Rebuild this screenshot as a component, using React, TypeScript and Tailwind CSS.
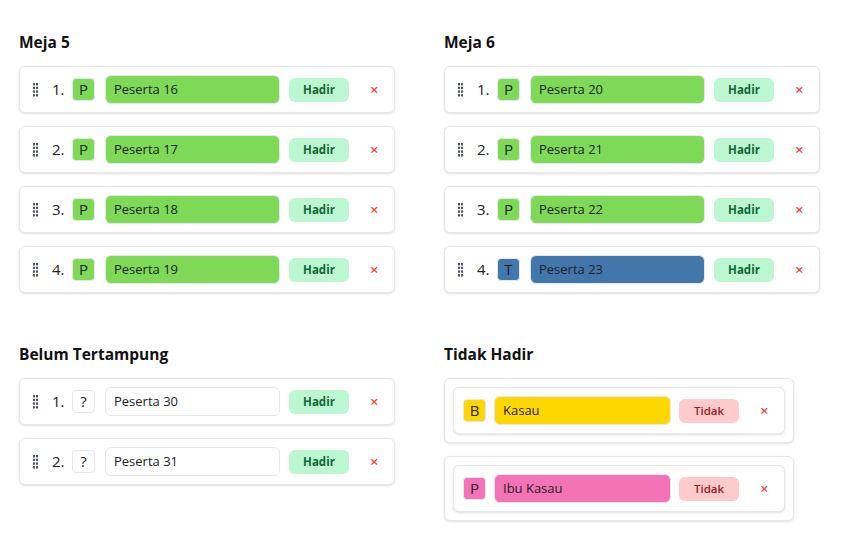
import React from "react";

interface Peserta {
  initial: string;
  name: string;
  color?: string; // warna latar badge & nama
}

const meja5: Peserta[] = [
  { initial: "P", name: "Peserta 16", color: "bg-[#7ed957]" },
  { initial: "P", name: "Peserta 17", color: "bg-[#7ed957]" },
  { initial: "P", name: "Peserta 18", color: "bg-[#7ed957]" },
  { initial: "P", name: "Peserta 19", color: "bg-[#7ed957]" },
];

const meja6: Peserta[] = [
  { initial: "P", name: "Peserta 20", color: "bg-[#7ed957]" },
  { initial: "P", name: "Peserta 21", color: "bg-[#7ed957]" },
  { initial: "P", name: "Peserta 22", color: "bg-[#7ed957]" },
  { initial: "T", name: "Peserta 23", color: "bg-[#4177ab]" },
];

const belum: Peserta[] = [
  { initial: "?", name: "Peserta 30" },
  { initial: "?", name: "Peserta 31" },
];

const tidakHadir: Peserta[] = [
  { initial: "B", name: "Kasau", color: "bg-[#ffd700]" },
  { initial: "P", name: "Ibu Kasau", color: "bg-[#f472b6]" },
];

// ikon pegangan drag (titik 2x4)
const Grip = () => (
  <svg width="5" height="14" viewBox="0 0 5 14" className="shrink-0">
    {[0, 1, 2, 3].map((r) =>
      [0, 3].map((c) => (
        <rect key={`${r}-${c}`} x={c} y={r * 3.7} width="2" height="2.4" fill="#4b5563" />
      ))
    )}
  </svg>
);

const Badge = ({ p }: { p: Peserta }) => (
  <div
    className={`flex h-[23px] w-[23px] shrink-0 items-center justify-center rounded-[4px] border border-gray-200 text-[15px] text-[#222] ${
      p.color ?? "bg-white"
    }`}
  >
    {p.initial}
  </div>
);

const NameBox = ({ p, w }: { p: Peserta; w: string }) => (
  <div
    className={`flex h-[29px] ${w} shrink-0 items-center rounded-[6px] border border-gray-200 pl-[8px] text-[13px] text-[#222] ${
      p.color ?? "bg-white"
    }`}
  >
    {p.name}
  </div>
);

const Close = () => (
  <span className="ml-[21px] text-[15px] leading-none font-semibold text-[#ef4444]">×</span>
);

const Row = ({ p, no }: { p: Peserta; no: number }) => (
  <div className="flex items-center rounded-md border border-gray-200 bg-white py-[8px] pl-[13px] shadow-sm">
    <Grip />
    <span className="ml-[14px] w-[20px] shrink-0 text-[15px] text-[#222]">{no}.</span>
    <Badge p={p} />
    <div className="ml-[10px]">
      <NameBox p={p} w="w-[175px]" />
    </div>
    <div className="ml-[9px] flex h-[24px] w-[60px] items-center justify-center rounded-[6px] bg-[#bbf7d0] text-[11.5px] font-bold text-[#166534]">
      Hadir
    </div>
    <Close />
  </div>
);

const AbsentRow = ({ p }: { p: Peserta }) => (
  <div className="w-[350px] rounded-md border border-gray-200 bg-white p-[8px] shadow-sm">
    <div className="flex items-center rounded-md border border-gray-200 bg-white py-[8px] pl-[9px] shadow-sm">
      <Badge p={p} />
      <div className="ml-[8px]">
        <NameBox p={p} w="w-[177px]" />
      </div>
      <div className="ml-[8px] flex h-[24px] w-[60px] items-center justify-center rounded-[6px] bg-[#fecaca] text-[11.5px] font-semibold text-[#991b1b]">
        Tidak
      </div>
      <Close />
    </div>
  </div>
);

const Section = ({ title, children }: { title: string; children: React.ReactNode }) => (
  <div>
    <h2 className="mb-[12px] text-[15.5px] leading-6 font-bold text-[#111]">{title}</h2>
    <div className="flex flex-col gap-[13px]">{children}</div>
  </div>
);

export default function App() {
  return (
    <div
      className="min-h-[538px] bg-white pt-[30px] pl-[19px]"
      style={{ fontFamily: "'Open Sans', 'Noto Sans', sans-serif" }}
    >
      <div className="grid grid-cols-[376px_376px] gap-x-[49px] gap-y-[49px]">
        <Section title="Meja 5">
          {meja5.map((p, i) => (
            <Row key={i} p={p} no={i + 1} />
          ))}
        </Section>
        <Section title="Meja 6">
          {meja6.map((p, i) => (
            <Row key={i} p={p} no={i + 1} />
          ))}
        </Section>
        <Section title="Belum Tertampung">
          {belum.map((p, i) => (
            <Row key={i} p={p} no={i + 1} />
          ))}
        </Section>
        <Section title="Tidak Hadir">
          {tidakHadir.map((p, i) => (
            <AbsentRow key={i} p={p} />
          ))}
        </Section>
      </div>
    </div>
  );
}
